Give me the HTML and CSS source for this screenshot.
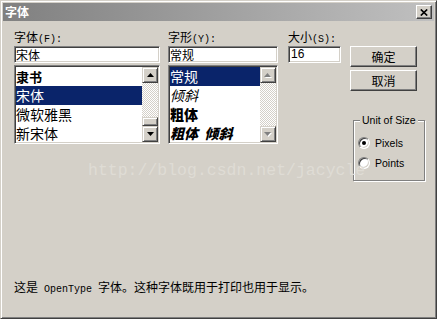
FILE: index.html
```html
<!DOCTYPE html>
<html>
<head>
<meta charset="utf-8">
<title>字体</title>
<link rel="stylesheet" href="styles.css">
</head>
<body>
<div class="window">
  <div class="titlebar">
    <span class="title">字体</span>
    <span class="close">
      <svg width="8" height="7" viewBox="0 0 8 7"><path d="M0.8 0.5 L7.2 6.5 M7.2 0.5 L0.8 6.5" stroke="#000" stroke-width="1.7" fill="none"/></svg>
    </span>
  </div>

  <div class="body">
    <div class="columns">
      <div class="col col-font">
        <div class="label">字体<span class="key">(F):</span></div>
        <div class="field">宋体</div>
        <div class="listbox">
          <ul class="items">
            <li class="lishu">隶书</li>
            <li class="sel">宋体</li>
            <li>微软雅黑</li>
            <li>新宋体</li>
          </ul>
          <div class="scrollbar">
            <span class="sb-btn"><svg width="7" height="4" viewBox="0 0 7 4"><path d="M3.5 0 L7 4 L0 4 Z" fill="#000"/></svg></span>
            <span class="sb-track"></span>
            <span class="sb-thumb"></span>
            <span class="sb-btn"><svg width="7" height="4" viewBox="0 0 7 4"><path d="M0 0 L7 0 L3.5 4 Z" fill="#000"/></svg></span>
          </div>
        </div>
      </div>

      <div class="col col-style">
        <div class="label">字形<span class="key">(Y):</span></div>
        <div class="field">常规</div>
        <div class="listbox">
          <ul class="items">
            <li class="sel">常规</li>
            <li class="italic">倾斜</li>
            <li class="bold">粗体</li>
            <li class="bold italic">粗体&nbsp;&nbsp;倾斜</li>
          </ul>
          <div class="scrollbar">
            <span class="sb-btn off"><svg width="8" height="5" viewBox="0 0 8 5"><path d="M4.5 1 L8 5 L1 5 Z" fill="#fff"/><path d="M3.5 0 L7 4 L0 4 Z" fill="#808080"/></svg></span>
            <span class="sb-track"></span>
            <span class="sb-btn off"><svg width="8" height="5" viewBox="0 0 8 5"><path d="M1 1 L8 1 L4.5 5 Z" fill="#fff"/><path d="M0 0 L7 0 L3.5 4 Z" fill="#808080"/></svg></span>
          </div>
        </div>
      </div>

      <div class="col col-size">
        <div class="label">大小<span class="key">(S):</span></div>
        <div class="field num">16</div>
      </div>

      <div class="col col-btns">
        <div class="btn ok">确定</div>
        <div class="btn">取消</div>
        <div class="group">
          <span class="legend">Unit of Size</span>
          <div class="radio-row"><span class="radio on"></span>Pixels</div>
          <div class="radio-row"><span class="radio"></span>Points</div>
        </div>
      </div>
    </div>

    <div class="note">这是<span class="mono"> OpenType </span>字体。这种字体既用于打印也用于显示。</div>
  </div>

  <div class="watermark">http://blog.csdn.net/jacycle</div>
</div>
</body>
</html>
```

FILE: styles.css
```css
* {
  box-sizing: border-box;
}
body {
  margin: 0;
  background: #d4d0c8;
  font-family: "Noto Sans CJK SC", sans-serif;
  font-size: 12px;
  color: #000;
}
.window {
  position: relative;
  width: 437px;
  height: 319px;
  display: flex;
  flex-direction: column;
  padding: 2px;
  background: #d4d0c8;
  border: 1px solid;
  border-color: #d4d0c8 #404040 #404040 #d4d0c8;
  box-shadow: inset 1px 1px #fff, inset -1px -1px #808080;
}
.titlebar {
  height: 18px;
  display: flex;
  align-items: center;
  padding: 0 2px 0 2px;
  background: linear-gradient(90deg, #808080, #c0c0c0);
}
.title {
  color: #fff;
  font-weight: bold;
  line-height: 18px;
}
.close {
  margin-left: auto;
  width: 16px;
  height: 14px;
  display: flex;
  align-items: center;
  justify-content: center;
  background: #d4d0c8;
  border: 1px solid;
  border-color: #fff #404040 #404040 #fff;
  box-shadow: inset -1px -1px #808080;
}
.body {
  flex: 1;
  display: flex;
  flex-direction: column;
  padding: 8px 0 0 11px;
}
.columns {
  display: flex;
}
.col-font {
  width: 146px;
  margin-right: 8px;
}
.col-style {
  width: 110px;
  margin-right: 10px;
}
.col-size {
  width: 53px;
  margin-right: 9px;
}
.col-btns {
  width: 76px;
}
.label {
  height: 16px;
  line-height: 16px;
  white-space: nowrap;
}
.key {
  font-family: "Liberation Mono", monospace;
  font-size: 10px;
}
.field {
  margin-top: 1px;
  height: 17px;
  padding: 0 1px;
  line-height: 15px;
  background: #fff;
  border: 1px solid;
  border-color: #808080 #fff #fff #808080;
  box-shadow: inset 1px 1px #404040, inset -1px -1px #d4d0c8;
  white-space: nowrap;
  overflow: hidden;
}
.field.num {
  font-family: "Liberation Sans", sans-serif;
  padding-left: 2px;
}
.listbox {
  margin-top: 2px;
  height: 79px;
  display: flex;
  padding: 1px;
  background: #fff;
  border: 1px solid;
  border-color: #808080 #fff #fff #808080;
  box-shadow: inset 1px 1px #404040, inset -1px -1px #d4d0c8;
}
.items {
  flex: 1;
  margin: 0;
  padding: 0;
  list-style: none;
  overflow: hidden;
}
.items > li {
  height: 19px;
  line-height: 19px;
  font-size: 14px;
  white-space: nowrap;
}
.items > li.sel {
  background: #0a246a;
  color: #fff;
}
.items > li.lishu {
  font-size: 13px;
  font-weight: bold;
}
.items > li.bold {
  font-weight: 900;
}
.items > li.italic {
  font-style: italic;
}
.scrollbar {
  width: 16px;
  display: flex;
  flex-direction: column;
}
.sb-btn {
  height: 16px;
  display: flex;
  align-items: center;
  justify-content: center;
  background: #d4d0c8;
  border: 1px solid;
  border-color: #d4d0c8 #404040 #404040 #d4d0c8;
  box-shadow: inset 1px 1px #fff, inset -1px -1px #808080;
}
.sb-track {
  flex: 1;
  background: repeating-conic-gradient(#d4d0c8 0 25%, #fff 0 50%) 0 0 / 2px 2px;
}
.sb-thumb {
  height: 9px;
  background: #d4d0c8;
  border: 1px solid;
  border-color: #d4d0c8 #404040 #404040 #d4d0c8;
  box-shadow: inset 1px 1px #fff, inset -1px -1px #808080;
}
.btn {
  width: 67px;
  height: 21px;
  margin-top: 3px;
  display: flex;
  align-items: center;
  justify-content: center;
  background: #d4d0c8;
  border: 1px solid;
  border-color: #fff #404040 #404040 #fff;
  box-shadow: inset -1px -1px #808080;
}
.btn.ok {
  margin-top: 17px;
}
.group {
  position: relative;
  width: 72px;
  height: 61px;
  margin: 29px 0 0 3px;
  padding-top: 12px;
  border: 1px solid #808080;
  box-shadow: inset 1px 1px #fff, 1px 1px #fff;
  font-family: "Liberation Sans", sans-serif;
  font-size: 10.5px;
}
.legend {
  position: absolute;
  top: -7px;
  left: 6px;
  padding: 0 2px;
  line-height: 13px;
  background: #d4d0c8;
}
.radio-row {
  height: 20px;
  display: flex;
  align-items: center;
  padding-left: 4px;
}
.radio {
  width: 12px;
  height: 12px;
  margin-right: 5px;
  border-radius: 50%;
  background: #fff;
  border: 1px solid;
  border-color: #808080 #fff #fff #808080;
  box-shadow: inset 1px 1px #404040, inset -1px -1px #d4d0c8;
  display: flex;
  align-items: center;
  justify-content: center;
}
.radio.on::after {
  content: "";
  width: 4px;
  height: 4px;
  border-radius: 50%;
  background: #000;
}
.note {
  margin-top: auto;
  margin-bottom: 21px;
  height: 16px;
  line-height: 16px;
  white-space: nowrap;
}
.mono {
  font-family: "Liberation Mono", monospace;
  font-size: 10px;
}
.watermark {
  position: absolute;
  left: 87px;
  top: 162px;
  font-family: "Liberation Mono", monospace;
  font-size: 16.5px;
  line-height: 1;
  color: #dfdcd5;
  pointer-events: none;
}
```
